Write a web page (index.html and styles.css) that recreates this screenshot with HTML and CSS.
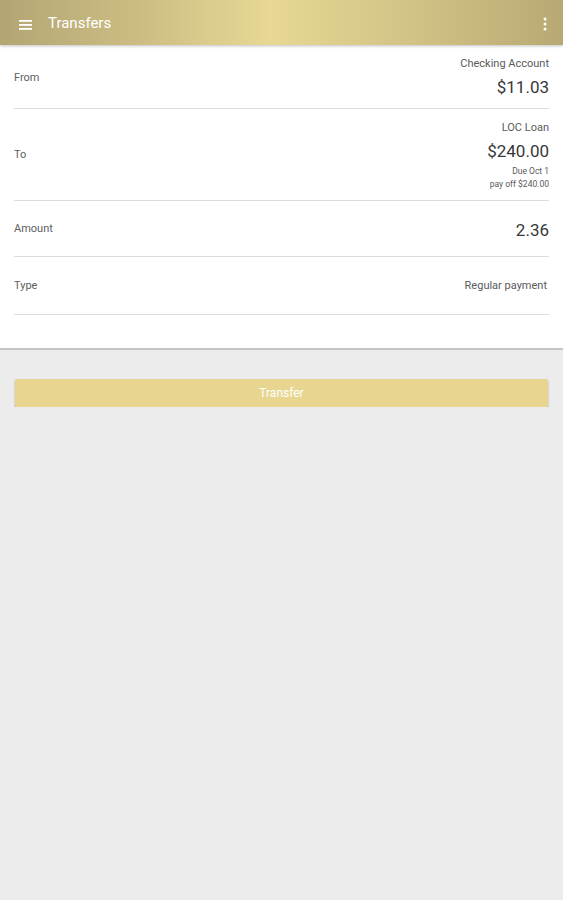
FILE: index.html
```html
<!DOCTYPE html>
<html lang="en">
<head>
    <meta charset="UTF-8">
    <meta name="viewport" content="width=device-width, initial-scale=1.0">
    <title>Transfers</title>
    <link rel="stylesheet" href="styles.css">
</head>
<body>

<!-- Toolbar -->
<div class="toolbar">
    <div class="menu-icon">
        <svg width="14" height="12" viewBox="0 0 14 12">
            <rect x="0" y="1" width="13" height="1.8" fill="#fff"/>
            <rect x="0" y="5" width="13" height="1.8" fill="#fff"/>
            <rect x="0" y="9" width="13" height="1.8" fill="#fff"/>
        </svg>
    </div>
    <div class="title">Transfers</div>
    <div class="more-icon">
        <svg width="4" height="14" viewBox="0 0 4 14">
            <circle cx="2" cy="2" r="1.5" fill="#fff"/>
            <circle cx="2" cy="7" r="1.5" fill="#fff"/>
            <circle cx="2" cy="12" r="1.5" fill="#fff"/>
        </svg>
    </div>
</div>

<!-- Transfer form -->
<div class="card">
    <div class="row row-from">
        <div class="label">From</div>
        <div class="value">
            <div class="small">Checking Account</div>
            <div class="big">$11.03</div>
        </div>
    </div>
    <div class="row row-to">
        <div class="label">To</div>
        <div class="value">
            <div class="small">LOC Loan</div>
            <div class="big">$240.00</div>
            <div class="tiny">Due Oct 1</div>
            <div class="tiny">pay off $240.00</div>
        </div>
    </div>
    <div class="row row-amount">
        <div class="label">Amount</div>
        <div class="value">
            <div class="big">2.36</div>
        </div>
    </div>
    <div class="row row-type">
        <div class="label">Type</div>
        <div class="value">
            <div class="small type">Regular payment</div>
        </div>
    </div>
</div>

<div class="actions">
    <button class="transfer-btn">Transfer</button>
</div>

</body>
</html>
```

FILE: styles.css
```css
body {
    font-family: Roboto, "Noto Sans", sans-serif;
    background-color: #ececec;
    color: #333;
    margin: 0;
}

.toolbar {
    height: 45px;
    display: flex;
    align-items: center;
    background: linear-gradient(90deg, #b3a673 0%, #cdbd84 25%, #e8d894 48%, #d3c386 72%, #b8a974 100%);
    box-shadow: 0 1px 3px rgba(0,0,0,0.25);
    position: relative;
    z-index: 1;
}

.menu-icon {
    width: 14px;
    height: 12px;
    margin-left: 19px;
    margin-top: -1px;
}

.title {
    color: #fff;
    font-size: 15px;
    margin-left: 15px;
    flex: 1;
    margin-top: 1px;
}

.more-icon {
    width: 4px;
    height: 14px;
    margin-right: 16px;
}

.card {
    background-color: white;
    padding: 2px 14px 33px 14px;
    border-bottom: 2px solid #c4c4c4;
}

.row {
    display: flex;
    align-items: center;
    justify-content: space-between;
    border-bottom: 1px solid #dcdcdc;
}

.row-from {
    height: 61px;
}

.row-to {
    height: 91px;
}

.row-amount {
    height: 55px;
}

.row-type {
    height: 57px;
}

.label {
    font-size: 11px;
    color: #606060;
}

.value {
    text-align: right;
}

.small {
    font-size: 11px;
    line-height: 14px;
    color: #5a5a5a;
}

.small.type {
    margin-right: 2px;
}

.big {
    font-size: 17px;
    line-height: 28px;
    margin-top: 2px;
    color: #383838;
}

.tiny {
    font-size: 8.5px;
    line-height: 13px;
    color: #5a5a5a;
}

.row-from .value {
    margin-top: 3px;
}

.row-to .value {
    margin-top: 3px;
}

.actions {
    padding: 29px 15px 0 15px;
}

.transfer-btn {
    width: 100%;
    height: 28px;
    background-color: #e8d690;
    color: white;
    border: none;
    border-radius: 2px;
    font-family: Roboto, "Noto Sans", sans-serif;
    font-size: 12px;
    box-shadow: 0 1px 2px rgba(0,0,0,0.35);
}
```
